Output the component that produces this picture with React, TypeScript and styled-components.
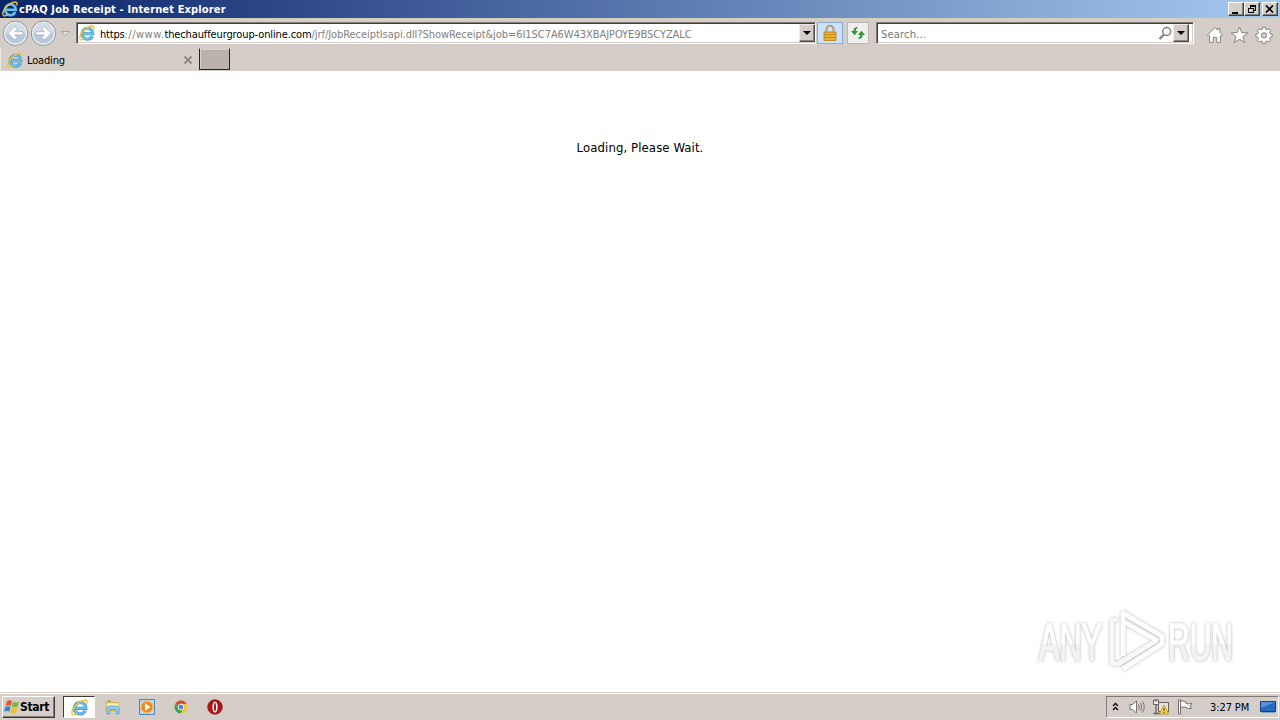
import styled, { createGlobalStyle } from 'styled-components';

const GlobalStyle = createGlobalStyle`
    * {
        box-sizing: border-box;
    }

    body {
        margin: 0;
        overflow: hidden;
        font-family: "DejaVu Sans Condensed", "DejaVu Sans", sans-serif;
        font-stretch: condensed;
        font-size: 11px;
        color: #000;
        background: #fff;
    }

    svg {
        display: block;
        flex: none;
    }
`;

const Screen = styled.div`
    display: flex;
    flex-direction: column;
    width: 1280px;
    height: 720px;
`;

const TitleBar = styled.header`
    display: flex;
    align-items: center;
    height: 18px;
    padding: 0 2px;
    background: linear-gradient(90deg, #0a246a, #a6caf0);
`;

const Title = styled.div`
    flex: 1;
    padding: 1px 0 0 1px;
    font-weight: bold;
    line-height: 17px;
    letter-spacing: 0.14px;
    color: #fff;
    white-space: nowrap;
`;

const CaptionButton = styled.button<{ $gap?: number }>`
    display: flex;
    align-items: center;
    justify-content: center;
    width: 16px;
    height: 14px;
    margin-left: ${({ $gap }) => $gap ?? 0}px;
    padding: 0;
    border: 1px solid;
    border-color: #fff #404040 #404040 #fff;
    box-shadow: inset -1px -1px #808080;
    background: #d4d0c8;
`;

const AddressRow = styled.div`
    display: flex;
    height: 30px;
    padding-left: 2px;
    background: #d5cec8;
    border-top: 1px solid #d3d0bf;
`;

const NavButtons = styled.div`
    display: flex;
    width: 74px;
    padding-top: 1px;
`;

const Field = styled.div<{ $width: number; $right: number }>`
    display: flex;
    align-items: center;
    width: ${({ $width }) => $width}px;
    height: 22px;
    margin-top: 3px;
    padding: 0 ${({ $right }) => $right}px 0 2px;
    border: 1px solid;
    border-color: #827b78 #fff #fff #827b78;
    box-shadow: inset 1px 1px #403c40, inset -1px -1px #d5cec8;
    background: #fff;
`;

const Url = styled.div`
    flex: 1;
    padding: 2px 0 0 5px;
    white-space: nowrap;
`;

const UrlPart = styled.span<{ $dark?: boolean; $spacing: number }>`
    color: ${({ $dark }) => ($dark ? '#000' : '#808080')};
    letter-spacing: ${({ $spacing }) => $spacing}px;
`;

const DropButton = styled.button`
    display: flex;
    align-items: center;
    justify-content: center;
    width: 16px;
    height: 18px;
    padding: 0;
    border: 1px solid;
    border-color: #eee9e5 #504c4a #504c4a #eee9e5;
    box-shadow: inset -1px -1px #8a8380;
    background: #d5cec8;
`;

const ToolButton = styled.button<{ $active?: boolean }>`
    display: flex;
    align-items: center;
    justify-content: center;
    width: ${({ $active }) => ($active ? 26 : 22)}px;
    height: 22px;
    margin: 3px 0 0 ${({ $active }) => ($active ? 1 : 4)}px;
    padding: 0;
    border: 1px solid ${({ $active }) => ($active ? '#84ace0' : '#b9b7b3')};
    background: ${({ $active }) => ($active ? '#cde2fb' : '#eeeeec')};
`;

const SearchGap = styled.div`
    width: 7px;
`;

const Placeholder = styled.div`
    flex: 1;
    padding: 2px 0 0 2px;
    color: #757575;
    letter-spacing: 0.2px;
`;

const CommandIcons = styled.div`
    display: flex;
    gap: 6px;
    padding: 7px 0 0 12px;
`;

const TabRow = styled.div`
    display: flex;
    height: 23px;
    background: #d5cec8;
    border-bottom: 1px solid #d9d2cb;
`;

const Tab = styled.div`
    display: flex;
    align-items: center;
    width: 199px;
    height: 22px;
    padding: 1px 6px 0 6px;
    border-left: 1px solid #eeeae6;
`;

const TabLabel = styled.span`
    flex: 1;
    padding: 1px 0 0 4px;
    letter-spacing: -0.15px;
`;

const NewTab = styled.div`
    width: 31px;
    height: 22px;
    border: 1px solid;
    border-color: #d5cec8 #282424 #282424 #282424;
    box-shadow: inset 1px 1px #d8d1cb;
    background: #bbb2ac;
`;

const Page = styled.main`
    position: relative;
    flex: 1;
    padding-top: 69px;
    background: #fff;
    text-align: center;
    font-size: 13px;
    line-height: 16px;
    letter-spacing: 0.1px;
`;

const Watermark = styled.svg`
    position: absolute;
    left: 1030px;
    top: 532px;
    overflow: visible;
    letter-spacing: 0;
`;

const TaskBar = styled.footer`
    display: flex;
    align-items: center;
    height: 28px;
    padding: 1px 1px 0 2px;
    background: #d5cec8;
    border-top: 1px solid #d5cec8;
    box-shadow: inset 0 1px #fff;
`;

const StartButton = styled.button`
    display: flex;
    align-items: center;
    width: 53px;
    height: 22px;
    padding: 0 0 0 1px;
    border: 1px solid;
    border-color: #fff #403c3a #403c3a #fff;
    box-shadow: inset -1px -1px #827b78;
    background: #d5cec8;
    color: #000;
    font-family: inherit;
    font-stretch: inherit;
    font-size: 12px;
    font-weight: bold;
    letter-spacing: -0.3px;
`;

const Launchers = styled.div`
    display: flex;
    flex: 1;
    gap: 2px;
    padding-left: 8px;
`;

const Launcher = styled.div<{ $active?: boolean }>`
    display: flex;
    align-items: center;
    justify-content: center;
    width: 32px;
    height: 22px;
    border: 1px solid;
    border-color: ${({ $active }) => ($active ? '#403c3a #fff #fff #403c3a' : 'transparent')};
    background: ${({ $active }) => ($active ? '#fff' : 'transparent')};
`;

const Tray = styled.div`
    display: flex;
    align-items: center;
    width: 173px;
    height: 22px;
    padding-left: 5px;
    border: 1px solid;
    border-color: #827b78 #fff #fff #827b78;
`;

const TrayIcons = styled.div`
    display: flex;
    align-items: center;
    gap: 8px;
    width: 98px;
`;

const Clock = styled.span`
    width: 50px;
    white-space: nowrap;
    letter-spacing: -0.1px;
`;

const IeIcon = ({ size = 16 }: { size?: number }) => (
    <svg width={size} height={size} viewBox="0 0 16 16" fill="none">
        <path d="M13.4 11A5.4 5.4 0 1 1 13.9 8.8H4.4" stroke="#3c93cf" strokeWidth="3" />
        <path d="M13.3 11A5.3 5.3 0 1 1 13.8 8.8H4.5" stroke="#6fc5ef" strokeWidth="1.7" />
        <path d="M1.6 14.7C-.8 12 3.2 5.8 8 2.9 11.2.8 14.6.1 15 2.2c.1.7-.1 1.5-.5 2.3" stroke="#f1c232" strokeWidth="1.4" />
        <path d="M1.6 14.7c1 .6 2.5.1 4-.8" stroke="#f1c232" strokeWidth="1.3" />
    </svg>
);

const ArrowCircle = ({ forward }: { forward?: boolean }) => (
    <svg width="28" height="27" viewBox="0 0 28 27">
        <circle cx="13.5" cy="13.3" r="12.2" fill="#eef1f5" stroke="#858b94" strokeWidth=".9" />
        <circle cx="13.5" cy="13.3" r="10.3" fill="#b9c8da" />
        <path d="M3.3 13a10.2 10.2 0 0 1 20.4 0c-5 1.5-15.4 1.5-20.4 0z" fill="#d3dde8" />
        <path
            d="M5.8 13.3l7-6.8 2.6 2.5-2.7 2.7h8.3v3.2h-8.3l2.7 2.7-2.6 2.5z"
            fill="#fff"
            stroke="#9aaabd"
            strokeWidth=".7"
            transform={forward ? 'translate(27 0) scale(-1 1)' : undefined}
        />
    </svg>
);

const DownTriangle = () => (
    <svg width="8" height="4" viewBox="0 0 8 4">
        <path d="M0 0h8L4 4z" fill="#000" />
    </svg>
);

const AnyRunMark = () => (
    <Watermark width="240" height="84" viewBox="0 0 240 84">
        <defs>
            <linearGradient id="fade" x1="0" y1="0" x2="0" y2="1">
                <stop offset=".53" stopColor="#fff" />
                <stop offset=".53" stopColor="#f3f3f3" />
            </linearGradient>
            <filter id="edge" x="-10%" y="-20%" width="120%" height="140%">
                <feDropShadow dx="0" dy="0" stdDeviation="1.8" floodColor="#777" floodOpacity=".6" />
            </filter>
        </defs>
        <g
            filter="url(#edge)"
            fill="url(#fade)"
            stroke="url(#fade)"
            strokeWidth="1.4"
            fontFamily="'Liberation Sans Narrow', 'Liberation Sans', sans-serif"
            fontSize="52"
        >
            <text x="9" y="57" textLength="63" lengthAdjust="spacingAndGlyphs">ANY</text>
            <text x="138" y="57" textLength="65" lengthAdjust="spacingAndGlyphs">RUN</text>
        </g>
        <g filter="url(#edge)" fill="none" stroke="#fdfdfd" strokeWidth="4.5" strokeLinejoin="round">
            <path d="M87 16l-5 2v42l6 1 39-24" stroke="#f8f8f8" />
            <path d="M93 53V10l39 23v8L93 66" />
            <path d="M94 19l34 19" />
        </g>
    </Watermark>
);

export default function App() {
    return (
        <>
            <GlobalStyle />
            <Screen>
                <TitleBar>
                    <IeIcon />
                    <Title>cPAQ Job Receipt - Internet Explorer</Title>
                    <CaptionButton>
                        <svg width="10" height="10"><path d="M1 8h6v2H1z" /></svg>
                    </CaptionButton>
                    <CaptionButton>
                        <svg width="10" height="10" fill="none" stroke="#000" shapeRendering="crispEdges">
                            <path d="M3 1h6M3 2.5h5.5v4H7M3.5 2v2M1 4h6M1.5 4.5h5v4h-5z" />
                        </svg>
                    </CaptionButton>
                    <CaptionButton $gap={2}>
                        <svg width="10" height="10" stroke="#000" strokeWidth="1.7"><path d="M1 1.5l7 7M8 1.5l-7 7" /></svg>
                    </CaptionButton>
                </TitleBar>

                <AddressRow>
                    <NavButtons>
                        <ArrowCircle />
                        <ArrowCircle forward />
                        <svg width="14" height="27" viewBox="0 0 14 27">
                            <path d="M3.5 11.5h8l-4 4.5z" fill="#e6e2de" stroke="#aaa39e" />
                        </svg>
                    </NavButtons>
                    <Field $width={740} $right={0}>
                        <IeIcon />
                        <Url>
                            <UrlPart $dark $spacing={-0.2}>https</UrlPart>
                            <UrlPart $spacing={0.5}>://www.</UrlPart>
                            <UrlPart $dark $spacing={-0.12}>thechauffeurgroup-online.com</UrlPart>
                            <UrlPart $spacing={-0.06}>/jrf/JobReceiptIsapi.dll?ShowReceipt&amp;job=6I1SC7A6W43XBAJPOYE9BSCYZALC</UrlPart>
                        </Url>
                        <DropButton><DownTriangle /></DropButton>
                    </Field>
                    <ToolButton $active>
                        <svg width="16" height="18" viewBox="0 0 16 18">
                            <path d="M4.5 9V5.2a3.5 3.5 0 0 1 7 0V9" fill="none" stroke="#9b824f" strokeWidth="2" />
                            <path d="M4.5 9V5.2a3.5 3.5 0 0 1 7 0V9" fill="none" stroke="#e3d3a2" strokeWidth=".7" />
                            <path d="M2 8h12v8.5H2z" fill="#e8b233" stroke="#b87c17" strokeWidth=".8" />
                            <path d="M2 10.5h12M2 13.5h12" stroke="#c98b18" />
                        </svg>
                    </ToolButton>
                    <ToolButton>
                        <svg width="16" height="16" viewBox="0 0 16 16" fill="#33933a">
                            <path d="M7.5 2C5 2 3.4 3.3 3.4 6H1l3.6 4.3L8 6H5.7c0-1.5.5-2.3 1.8-2.6zM8.5 14c2.5 0 4.1-1.3 4.1-4H15l-3.6-4.3L8 10h2.3c0 1.5-.5 2.3-1.8 2.6z" />
                        </svg>
                    </ToolButton>
                    <SearchGap />
                    <Field $width={318} $right={4}>
                        <Placeholder>Search...</Placeholder>
                        <svg width="16" height="16" viewBox="0 0 16 16" fill="none" stroke="#85807d">
                            <circle cx="9.7" cy="6.5" r="4" strokeWidth="1.5" />
                            <path d="M7 9.5L2.5 14" strokeWidth="2.3" />
                        </svg>
                        <DropButton><DownTriangle /></DropButton>
                    </Field>
                    <CommandIcons>
                        <svg width="18" height="18" viewBox="0 0 18 18" fill="#fff" stroke="#87827f">
                            <path d="M1.3 9.2L9 1.5l2.7 2.7V2.5h2.2v3.9l2.8 2.8-1.2 1.2-1-1v7h-3.7v-5H7.2v5H3.5v-7l-1 1z" />
                        </svg>
                        <svg width="19" height="18" viewBox="0 0 19 18" fill="#fff" stroke="#87827f">
                            <path d="M9.5 1l2.2 5.6 6.1.3-4.7 3.8 1.6 5.8-5.2-3.3-5.2 3.3 1.6-5.8L1.2 6.9l6.1-.3z" />
                        </svg>
                        <svg width="18" height="18" viewBox="0 0 18 18" fill="#fff" stroke="#87827f">
                            <path
                                d="M7.6 1.3h2.8l.4 2.1 1.2.5 1.8-1.2 1.9 1.9-1.2 1.8.5 1.2 2.1.4v2.8l-2.1.4-.5 1.2 1.2 1.8-1.9 1.9-1.8-1.2-1.2.5-.4 2.1H7.6l-.4-2.1-1.2-.5-1.8 1.2-1.9-1.9 1.2-1.8-.5-1.2-2.1-.4V8l2.1-.4.5-1.2-1.2-1.8 1.9-1.9L6 3.9l1.2-.5z"
                            />
                            <circle cx="9" cy="9.4" r="2.7" fill="#d5cec8" />
                        </svg>
                    </CommandIcons>
                </AddressRow>

                <TabRow>
                    <Tab>
                        <IeIcon />
                        <TabLabel>Loading</TabLabel>
                        <svg width="10" height="10" stroke="#8d8682" strokeWidth="1.8"><path d="M1.5 1.5l7 7M8.5 1.5l-7 7" /></svg>
                    </Tab>
                    <NewTab />
                </TabRow>

                <Page>
                    Loading, Please Wait.
                    <AnyRunMark />
                </Page>

                <TaskBar>
                    <StartButton>
                        <svg width="16" height="16" viewBox="0 0 16 16">
                            <path d="M3 2c2-1 3.5-.8 5 .2L6.8 7C5.2 6 3.5 6 1.6 6.8z" fill="#e5582b" />
                            <path d="M9 2.7c1.9 1 3.7 1 6 0l-1.3 4.8c-2 1-3.9.9-5.9 0z" fill="#79b541" />
                            <path d="M1.4 7.9c1.9-.9 3.6-.8 5.2.2l-1.3 4.6C3.8 11.8 2 11.7 0 12.6z" fill="#3b86c9" />
                            <path d="M7.6 8.6c2 1 3.8.9 5.9 0l-1.3 4.6c-2.1 1-4 .9-5.9 0z" fill="#f0bd27" />
                        </svg>
                        Start
                    </StartButton>
                    <Launchers>
                        <Launcher $active><IeIcon size={17} /></Launcher>
                        <Launcher>
                            <svg width="16" height="16" viewBox="0 0 16 16">
                                <path d="M1 2h5l1 1.5h7V12H1z" fill="#e9c968" stroke="#c7a54a" strokeWidth=".6" />
                                <path d="M2 4.5h11.5V8H2z" fill="#fff3bb" />
                                <path d="M3 1.5h2v2H3z" fill="#68b37a" />
                                <path d="M2 15V9.5C2 7.7 3 7 4.5 7h7c1.5 0 2.5.8 2.5 2.5V15h-3v-4.5H5V15z" fill="#8fcce9" stroke="#5699c1" strokeWidth=".7" />
                            </svg>
                        </Launcher>
                        <Launcher>
                            <svg width="16" height="16" viewBox="0 0 16 16">
                                <path d="M.5.5h15v15H.5z" fill="#b9d6ed" stroke="#5086b8" />
                                <circle cx="8" cy="8" r="6" fill="#f18a1d" stroke="#f9bc62" />
                                <path d="M6 4.3L11.5 8 6 11.7z" fill="#fff" />
                            </svg>
                        </Launcher>
                        <Launcher>
                            <svg width="14" height="14" viewBox="0 0 14 14">
                                <circle cx="7" cy="7" r="6.5" fill="#f3c82f" />
                                <path d="M7 7L1.4 3.7A6.5 6.5 0 0 1 12.7 3.8L7 4z" fill="#d94736" />
                                <path d="M1.4 3.7A6.5 6.5 0 0 0 6.6 13.5L9.5 8.5 7 7z" fill="#43a058" />
                                <circle cx="7" cy="7" r="2.9" fill="#4c86d5" stroke="#fff" strokeWidth=".9" />
                            </svg>
                        </Launcher>
                        <Launcher>
                            <svg width="16" height="16" viewBox="0 0 16 16">
                                <circle cx="8" cy="8" r="7.3" fill="#b51218" stroke="#7c1316" strokeWidth=".7" />
                                <ellipse cx="8" cy="8" rx="2.6" ry="5.6" fill="#fff" />
                                <ellipse cx="8" cy="8" rx="1" ry="4.3" fill="#a21519" />
                            </svg>
                        </Launcher>
                    </Launchers>
                    <Tray>
                        <TrayIcons>
                            <svg width="9" height="10" fill="none" stroke="#000" strokeWidth="1.3"><path d="M1 4l2.500-2.500L6 4M1 8l2.500-2.500L6 8" /></svg>
                            <svg width="16" height="16" viewBox="0 0 16 16" fill="none" stroke="#77736f">
                                <path d="M1 5.5h2.500L7.500 2v12l-4-3.500H1z" fill="#fff" />
                                <path d="M9.500 5.500q1.500 2.500 0 5M11.500 4q2.500 4 0 8M13.500 2.500q3.500 5.500 0 11" />
                            </svg>
                            <svg width="16" height="16" viewBox="0 0 16 16" fill="none">
                                <path d="M5.5 3.5h10v9h-10z" fill="#e4e3df" stroke="#66615e" />
                                <path d="M.5 1v4.5h5V1z" fill="#f4f3f0" stroke="#66615e" />
                                <path d="M3 .5V3M3 5.5v9M.5 14.5h8" stroke="#66615e" strokeWidth="1.3" />
                                <path d="M11 6l4.7 9H6.3z" fill="#ffd42d" stroke="#b88b12" strokeWidth=".7" />
                                <path d="M11 9v3M11 13v1" stroke="#333" />
                            </svg>
                            <svg width="16" height="16" viewBox="0 0 16 16" fill="#fff" stroke="#716c69">
                                <path d="M1.5 1h2v14h-2z" />
                                <path d="M3.5 2.5c2-.8 4-.5 5.5.5v1.5c2 .6 4 .4 6-.2l-2 3 1.5 2c-2 .6-4 .2-5.500-.8-1.500-.7-3.500-.7-5.500 0z" />
                            </svg>
                        </TrayIcons>
                        <Clock>3:27 PM</Clock>
                        <svg width="16" height="16" viewBox="0 0 16 16">
                            <path d="M.5 2.5h15v10H.5z" fill="#276bc1" stroke="#173e7b" />
                            <path d="M1 3h14L1 9z" fill="#5793db" />
                            <path d="M1 13h14v1H1z" fill="#89a5bd" />
                        </svg>
                    </Tray>
                </TaskBar>
            </Screen>
        </>
    );
}
